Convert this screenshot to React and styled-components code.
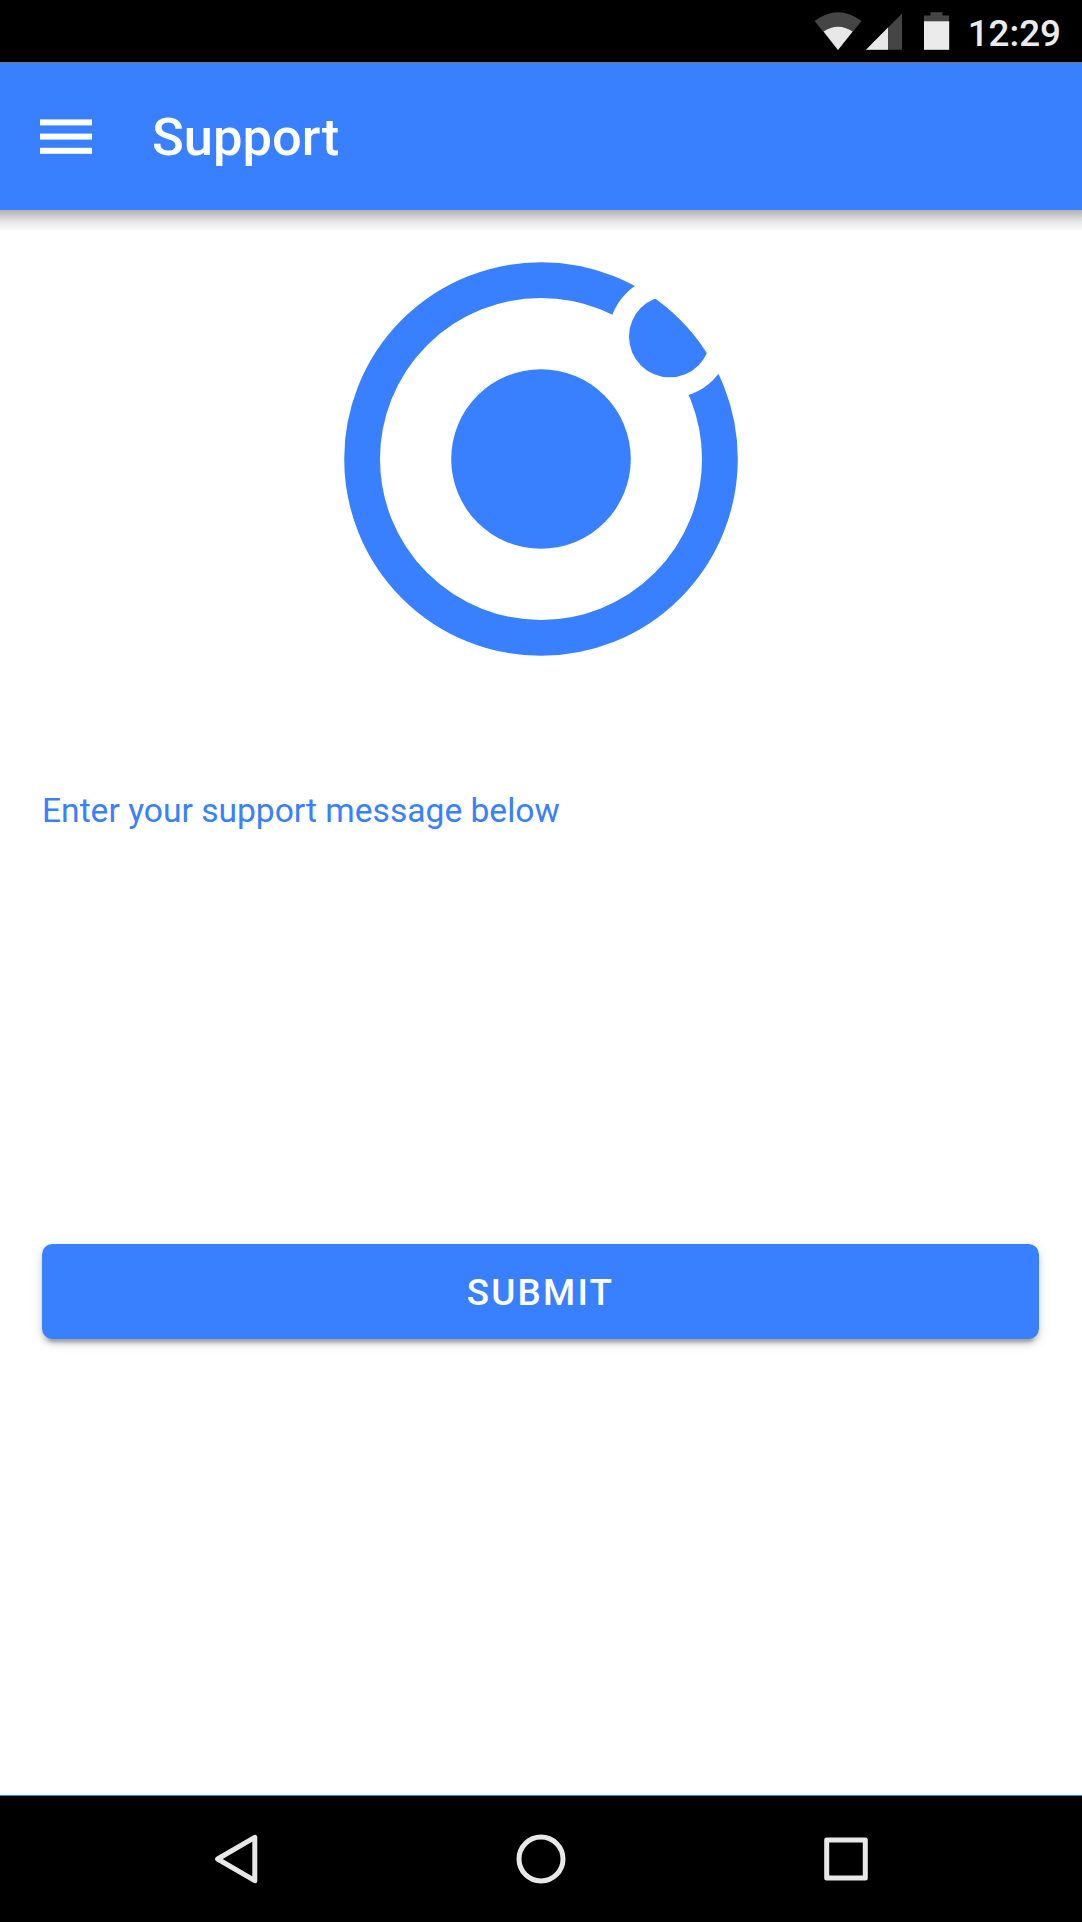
import React from "react";
import styled, { createGlobalStyle } from "styled-components";

const BLUE = "#3880ff";

const GlobalStyle = createGlobalStyle`
  html, body { margin: 0; padding: 0; background: #fff; }
  * { box-sizing: border-box; }
`;

const Screen = styled.div`
  width: 1082px;
  height: 1922px;
  display: flex;
  flex-direction: column;
  overflow: hidden;
  background: #fff;
  font-family: Roboto, "Liberation Sans", sans-serif;
`;

const StatusBar = styled.header`
  height: 63px;
  flex: none;
  display: flex;
  align-items: flex-start;
  justify-content: flex-end;
  padding-right: 21px;
  background: #000;
  border-bottom: 1px solid #777;
`;

const StatusIcons = styled.svg`
  display: block;
  width: 140px;
  height: 62px;
  margin-right: 16px;
`;

const Clock = styled.time`
  font-size: 36.8px;
  line-height: 44px;
  padding-top: 12px;
  font-weight: 500;
  color: #ebebeb;
`;

const Toolbar = styled.div`
  position: relative;
  height: 147px;
  flex: none;
  display: flex;
  align-items: center;
  padding-left: 39.5px;
  background: ${BLUE};

  &::after {
    content: "";
    position: absolute;
    top: 100%;
    left: 0;
    right: 0;
    height: 21px;
    background: linear-gradient(
      rgba(0, 0, 0, 0.3),
      rgba(0, 0, 0, 0.22) 22%,
      rgba(0, 0, 0, 0.09) 58%,
      rgba(0, 0, 0, 0.01)
    );
  }
`;

const MenuButton = styled.button`
  border: 0;
  padding: 0;
  background: none;
  line-height: 0;
`;

const Title = styled.h1`
  margin: 0 0 0 60.5px;
  font-size: 52.5px;
  line-height: 60px;
  font-weight: 500;
  color: #fff;
`;

const Content = styled.main`
  flex: 1;
  display: flex;
  flex-direction: column;
  padding: 51px 43px 0 42px;
`;

const Logo = styled.svg`
  display: block;
  align-self: center;
  flex: none;
  width: 396px;
  height: 396px;
`;

const MessageLabel = styled.label`
  margin-top: 134px;
  font-size: 33.6px;
  line-height: 40px;
  color: ${BLUE};
`;

const Submit = styled.button`
  margin-top: 413px;
  padding: 2px 0 0;
  height: 94.5px;
  flex: none;
  border: 0;
  border-radius: 10.5px;
  background: ${BLUE};
  color: #fff;
  font: 500 36.8px Roboto, "Liberation Sans", sans-serif;
  letter-spacing: 0.06em;
  text-transform: uppercase;
  box-shadow: 0 8px 3px -5px rgba(0, 0, 0, 0.2), 0 5px 5px rgba(0, 0, 0, 0.14),
    0 3px 13px rgba(0, 0, 0, 0.12);
`;

const NavBar = styled.nav`
  height: 127px;
  flex: none;
  display: flex;
  justify-content: space-between;
  padding: 38px 211px 0;
  background: #000;
  border-top: 1px solid ${BLUE};
`;

const NavIcon = styled.svg`
  display: block;
  width: 50px;
  height: 50px;
  fill: none;
  stroke: #e8e8e8;
  stroke-width: 5;
  stroke-linejoin: round;
`;

export default function App() {
  return (
    <Screen>
      <GlobalStyle />
      <StatusBar>
        <StatusIcons viewBox="812 0 140 62">
          <path d="M838 50 L814.6 21 Q838 3.6 861.6 21 Z" fill="#454545" />
          <path d="M838 50 L823.6 31.5 Q838 22 852.6 31.5 Z" fill="#e8e8e8" />
          <path d="M866 49.8 L902 13.4 V49.8 Z" fill="#454545" />
          <path d="M866 49.8 L888 27.6 V49.8 Z" fill="#e8e8e8" />
          <path d="M930.5 12.3 H942.5 V15.5 H949 V22 H924 V15.5 H930.5 Z" fill="#454545" />
          <path d="M924 21.3 H949.2 V49.8 H924 Z" fill="#ebebeb" />
        </StatusIcons>
        <Clock>12:29</Clock>
      </StatusBar>

      <Toolbar>
        <MenuButton aria-label="Menu">
          <svg width="52" height="36" viewBox="0 0 52 36" fill="#fff">
            <rect y="0.4" width="52" height="6" />
            <rect y="14.6" width="52" height="6" />
            <rect y="28.8" width="52" height="6" />
          </svg>
        </MenuButton>
        <Title>Support</Title>
      </Toolbar>

      <Content>
        <Logo viewBox="-198 -198 396 396" fill={BLUE}>
          <defs>
            <mask id="orbit" maskUnits="userSpaceOnUse" x="-198" y="-198" width="396" height="396">
              <rect x="-198" y="-198" width="396" height="396" fill="#fff" />
              <circle cx="128.7" cy="-122.4" r="61.4" fill="#000" />
            </mask>
            <clipPath id="disc">
              <circle r="196.8" />
            </clipPath>
          </defs>
          <circle r="178.9" fill="none" stroke={BLUE} strokeWidth="35.8" mask="url(#orbit)" />
          <circle r="89.8" />
          <circle cx="128.7" cy="-122.4" r="40.7" clipPath="url(#disc)" />
        </Logo>
        <MessageLabel>Enter your support message below</MessageLabel>
        <Submit>Submit</Submit>
      </Content>

      <NavBar>
        <NavIcon viewBox="0 0 50 50">
          <path d="M6.6 25 L43.8 3.3 V46.7 Z" />
        </NavIcon>
        <NavIcon viewBox="0 0 50 50">
          <circle cx="25" cy="25" r="22" />
        </NavIcon>
        <NavIcon viewBox="0 0 50 50">
          <rect x="5.7" y="5.9" width="38.6" height="38.2" />
        </NavIcon>
      </NavBar>
    </Screen>
  );
}
